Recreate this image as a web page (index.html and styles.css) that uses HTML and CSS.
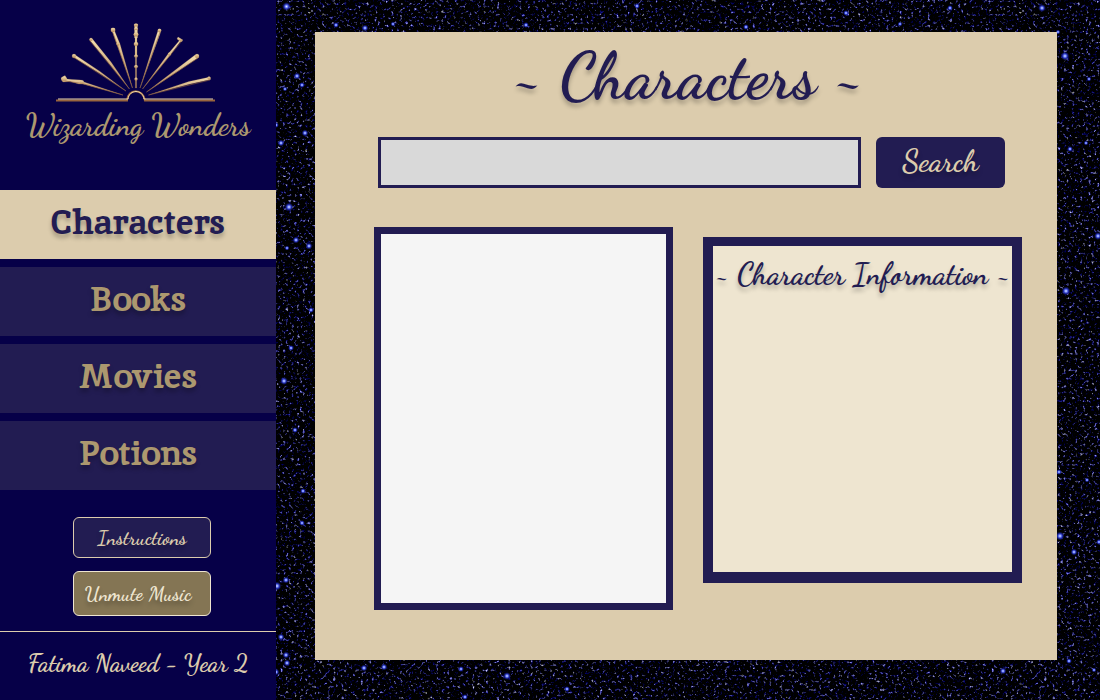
FILE: index.html
```html
<!DOCTYPE html>
<html lang="en">
<head>
<meta charset="utf-8">
<title>Wizarding Wonders</title>
<link rel="stylesheet" href="styles.css">
</head>
<body>
<div class="app">
  <aside class="sidebar">
    <div class="brand">
      <svg class="logo" viewBox="56 20 164 84" aria-hidden="true">
        <defs>
          <linearGradient id="gold" x1="0" y1="0" x2="0" y2="1">
            <stop offset="0" stop-color="#f4dfb0"/><stop offset="1" stop-color="#b5885a"/>
          </linearGradient>
        </defs>
        <g class="wand-light">
          <path d="M61 78 65 75.500 67 79 72 79.500 81 80 84 82 123 95 83 84 79 84 70 81.500 63 82Z"/>
          <path d="M73 54.700 76 55.500 100 71.500 126 91 99 73 74 57.500Z"/>
          <path d="M90.500 38.500 92.500 39 111 62 129.500 89 109 63.500 90 40.500Z"/>
          <path d="M111 28.500 115 28.500 115 32 120 44 132.500 88 117.500 46 112.500 32Z"/>
          <path d="M158.500 29 161 29.500 160 34 140 88 153 46Z"/>
          <path d="M179 38 182.500 41 180 42 169.500 56 142.500 89 168 54 179 41Z"/>
          <path d="M195 55 198.500 55 198.500 57.500 173 74.500 146.500 92 172 72.500Z"/>
          <path d="M210 77 210.500 79.500 190 84 148.500 95 189 81.500Z"/>
          <path d="M134.500 24h3v14h-.5v18h-.4v32h-1.200V56h-.4V38h-.5Z"/>
        </g>
        <g class="wand-shade">
          <path d="M65 81 82 83.500 123 95"/>
          <path d="M74 57.500 126 91"/>
          <path d="M90 41 129.500 89"/>
          <path d="M113 33 132.500 88"/>
          <path d="M160.500 31 140 88"/>
          <path d="M181 42 142.500 89"/>
          <path d="M198 58 146.500 92"/>
          <path d="M210 80 148.500 95"/>
        </g>
        <g class="knobs">
          <ellipse cx="136" cy="25" rx="2" ry="1.500"/><ellipse cx="136" cy="29" rx="2" ry="1"/>
          <ellipse cx="136" cy="34.500" rx="2.400" ry="2"/><ellipse cx="136" cy="44" rx="2.200" ry="2"/>
          <ellipse cx="136" cy="56" rx="1.800" ry="1.500"/><ellipse cx="136" cy="66.500" rx="1.800" ry="1.500"/>
          <ellipse cx="136" cy="79" rx="1.500" ry="1.500"/>
          <circle cx="113" cy="30" r="2.200"/><circle cx="91" cy="39.500" r="1.600"/>
          <circle cx="118" cy="44" r="1.500"/>
          <circle cx="74" cy="56" r="2"/><circle cx="64" cy="79" r="2.600"/>
          <circle cx="82" cy="82" r="1.800"/><circle cx="159.500" cy="30.500" r="1.700"/>
          <circle cx="197" cy="56" r="2"/><circle cx="169.500" cy="54" r="1.500"/>
          <circle cx="209" cy="78" r="1.500"/>
          <path d="m178 37 5 3-2 2-4-3Z"/>
        </g>
        <path class="book-edge" d="M56 100.500H127C128 88 143 88 145 100.500H215"/>
        <path class="book-line" d="M58 99H128C129 89 143 89 144 99H213"/>
      </svg>
      <p class="brand-name">Wizarding Wonders</p>
    </div>
    <nav class="menu">
      <a class="menu-item active" href="#characters">Characters</a>
      <a class="menu-item" href="#books">Books</a>
      <a class="menu-item" href="#movies">Movies</a>
      <a class="menu-item" href="#potions">Potions</a>
    </nav>
    <div class="actions">
      <button class="action" type="button">Instructions</button>
      <button class="action music" type="button">Unmute Music</button>
    </div>
    <footer class="credit">Fatima Naveed - Year 2</footer>
  </aside>
  <main class="stage">
    <svg class="sky" viewBox="276 0 824 700" preserveAspectRatio="xMidYMid slice" aria-hidden="true">
      <defs>
        <filter id="dust" x="0" y="0" width="100%" height="100%" color-interpolation-filters="sRGB">
          <feTurbulence type="fractalNoise" baseFrequency="0.36" numOctaves="2" seed="8"/>
          <feColorMatrix values="2.3 .9 0 0 -1.88 2.3 .9 0 0 -1.88 2.3 .9 .8 0 -2.1 0 0 0 0 1"/>
        </filter>
        <radialGradient id="glow">
          <stop offset="0" stop-color="#dfe6ff"/><stop offset=".25" stop-color="#7f93ff"/>
          <stop offset=".55" stop-color="#2430c0" stop-opacity=".9"/><stop offset="1" stop-color="#10145a" stop-opacity="0"/>
        </radialGradient>
      </defs>
      <rect x="276" width="824" height="700"/>
      <rect x="276" width="824" height="700" filter="url(#dust)"/>
      <g fill="url(#glow)">
        <circle cx="286.500" cy="6.500" r="4.500"/><circle cx="336" cy="25" r="3"/><circle cx="365" cy="28" r="3.500"/>
        <circle cx="393" cy="24" r="2.500"/><circle cx="526" cy="25" r="3"/><circle cx="297" cy="76" r="3.500"/>
        <circle cx="302" cy="85" r="3"/><circle cx="285" cy="89" r="2.500"/><circle cx="305" cy="133" r="3.500"/>
        <circle cx="281" cy="143" r="3.500"/><circle cx="276" cy="125" r="3"/><circle cx="289" cy="207" r="4.500"/>
        <circle cx="296" cy="240" r="3.500"/><circle cx="309" cy="246" r="3.500"/><circle cx="287" cy="248" r="2.500"/>
        <circle cx="311" cy="310" r="3"/><circle cx="291" cy="348" r="3"/><circle cx="284" cy="381" r="4"/>
        <circle cx="295" cy="430" r="3"/><circle cx="303" cy="491" r="3"/><circle cx="302" cy="523" r="3"/>
        <circle cx="286" cy="580" r="3.500"/><circle cx="277" cy="586" r="4.500"/><circle cx="281" cy="637" r="3.500"/>
        <circle cx="286" cy="655" r="3.500"/><circle cx="287" cy="663" r="3.500"/><circle cx="276" cy="672" r="3.500"/>
        <circle cx="364" cy="668" r="3.500"/><circle cx="384" cy="667" r="3.500"/><circle cx="461" cy="669" r="3"/>
        <circle cx="507" cy="676" r="4"/><circle cx="567" cy="689" r="3"/><circle cx="465" cy="697" r="3"/>
        <circle cx="637" cy="6" r="3"/><circle cx="746" cy="27" r="3"/><circle cx="846" cy="13" r="3"/>
        <circle cx="900" cy="24" r="2.500"/><circle cx="950" cy="8" r="3"/><circle cx="1042" cy="8" r="4"/>
        <circle cx="1065" cy="56" r="4.500"/><circle cx="1089" cy="79" r="2.500"/><circle cx="1058" cy="32" r="2.500"/>
        <circle cx="1070" cy="149" r="3"/><circle cx="1086" cy="143" r="2.500"/><circle cx="1098" cy="236" r="4"/>
        <circle cx="1066" cy="291" r="4.500"/><circle cx="1059" cy="472" r="3"/><circle cx="1087" cy="480" r="2.500"/>
        <circle cx="1060" cy="536" r="4.500"/><circle cx="1074" cy="552" r="3.500"/><circle cx="1099" cy="542" r="3"/>
        <circle cx="1069" cy="661" r="3"/><circle cx="1003" cy="671" r="3.500"/><circle cx="1094" cy="670" r="2.500"/>
      </g>
    </svg>
    <section class="panel">
      <h1 class="title">~ Characters ~</h1>
      <form class="search">
        <input class="search-box" type="text" aria-label="Search characters">
        <button class="search-button" type="button">Search</button>
      </form>
      <div class="boards">
        <div class="portrait"></div>
        <section class="info">
          <h2 class="info-title">~ Character Information ~</h2>
        </section>
      </div>
    </section>
  </main>
</div>
</body>
</html>
```

FILE: styles.css
```css
:root {
  --night: #060048;
  --indigo: #221c52;
  --sand: #dcccad;
  --cream: #eee5d0;
  --bronze: #ac986f;
  --script: "Dancing Script", "Liberation Serif", serif;
  --slab: "Inika", "DejaVu Serif Condensed", "DejaVu Serif", serif;
}
* { box-sizing: border-box; }
body { margin: 0; background: #000; font-family: var(--script); font-weight: 700; }
h1, h2, p { margin: 0; }
button { cursor: pointer; font-family: var(--script); font-weight: 700; }
.app { display: flex; min-height: 100vh; }

.sidebar { display: flex; flex-direction: column; flex: 0 0 276px; background: var(--night); }
.brand { height: 190px; padding-top: 20px; text-align: center; }
.logo { display: block; width: 164px; height: 84px; margin: 0 auto; }
.wand-shade { fill: none; stroke: #8b5d3c; stroke-width: .6; }
.wand-light, .knobs { fill: url(#gold); stroke: #c39a62; stroke-width: .2; }
.book-edge { fill: none; stroke: #98643d; stroke-width: 2; }
.book-line { fill: none; stroke: #eed9ac; stroke-width: 1; }
.brand-name { color: var(--bronze); font-size: 30px; line-height: 42px; }

.menu { display: grid; gap: 8px; }
.menu-item {
  height: 69px;
  background: var(--indigo);
  color: var(--bronze);
  font: bold 35px/64px var(--slab);
  text-align: center;
  text-decoration: none;
  text-shadow: 0 4px 4px rgba(0, 0, 0, .25);
}
.menu-item.active { background: var(--sand); color: var(--indigo); }

.actions { display: grid; gap: 13px; justify-content: center; padding: 27px 0 15px 8px; }
.action {
  width: 138px;
  height: 41px;
  padding: 0;
  border: 1px solid var(--sand);
  border-radius: 6px;
  background: var(--indigo);
  color: var(--sand);
  font-size: 20px;
  text-shadow: 0 4px 4px rgba(0, 0, 0, .25);
}
.action.music { height: 45px; padding-right: 8px; border-color: var(--cream); background: #847554; color: var(--cream); }
.credit {
  flex: 1;
  border-top: 1px solid var(--sand);
  color: var(--sand);
  font-size: 24px;
  line-height: 64px;
  text-align: center;
}

.stage { position: relative; display: flex; flex: 1; min-width: 0; padding: 32px 43px 40px 39px; }
.sky { position: absolute; inset: 0; width: 100%; height: 100%; }
.panel { position: relative; flex: 1; min-width: 0; background: var(--sand); color: var(--indigo); }
.title {
  padding: 8px 0 0 4px;
  font-size: 65px;
  font-weight: bold;
  line-height: 72px;
  text-align: center;
  text-shadow: 0 4px 4px rgba(0, 0, 0, .25);
}
.search { display: flex; gap: 15px; padding: 25px 52px 0 63px; }
.search-box {
  flex: 1;
  min-width: 0;
  height: 51px;
  padding: 0 12px;
  border: 3px solid var(--indigo);
  border-radius: 0;
  background: #d9d9d9;
  color: var(--indigo);
  font: 24px var(--script);
}
.search-button {
  width: 129px;
  height: 51px;
  padding-bottom: 4px;
  border: 0;
  border-radius: 6px;
  background: var(--indigo);
  color: var(--sand);
  font-size: 30px;
  text-shadow: 0 4px 4px rgba(0, 0, 0, .25);
}
.boards { display: flex; align-items: flex-start; gap: 30px; padding: 39px 35px 50px 59px; }
.portrait { flex: 285; height: 383px; border: 7px solid var(--indigo); background: #f5f5f5; }
.info {
  flex: 299;
  min-width: 0;
  min-height: 346px;
  margin-top: 10px;
  border: solid var(--indigo);
  border-width: 9px 10px 11px;
  background: var(--cream);
}
.info-title {
  padding-top: 8px;
  font-size: 30px;
  font-weight: bold;
  line-height: 40px;
  text-align: center;
  text-shadow: 0 4px 4px rgba(0, 0, 0, .25);
  white-space: nowrap;
}
```
